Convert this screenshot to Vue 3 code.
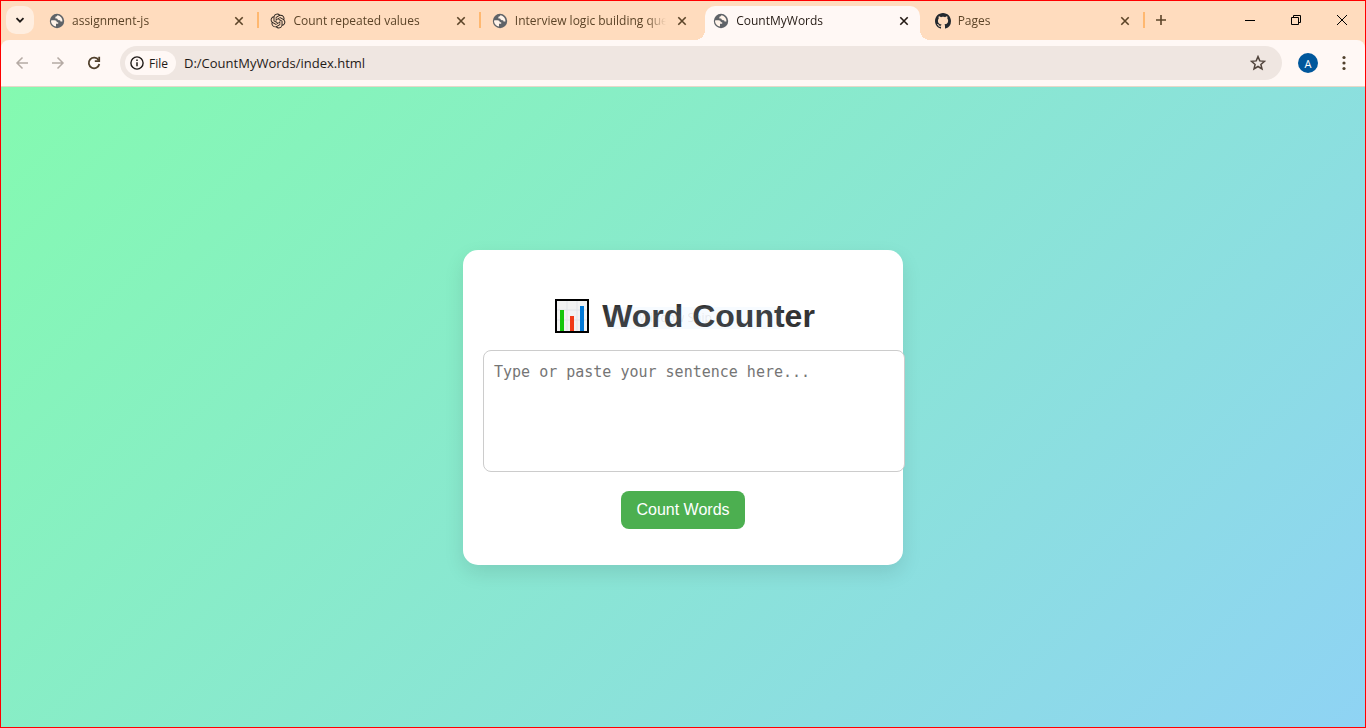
<script setup>
import { ref } from 'vue'

const tabs = [
  { title: 'assignment-js', icon: 'globe' },
  { title: 'Count repeated values', icon: 'knot' },
  { title: 'Interview logic building questions', icon: 'globe' },
  { title: 'CountMyWords', icon: 'globe', active: true },
  { title: 'Pages', icon: 'github' },
]
const address = ref('D:/CountMyWords/index.html')
const sentence = ref('')
</script>

<template>
  <div class="window">
    <header class="strip">
      <button class="search-tabs" aria-label="Search tabs">
        <svg width="10" height="10" viewBox="0 0 10 10"><path d="M1.5 3.2 5 6.7 8.5 3.2" fill="none" stroke="#1f1a17" stroke-width="1.8" /></svg>
      </button>
      <nav class="tabs">
        <div v-for="(tab, i) in tabs" :key="i" class="tab" :class="{ active: tab.active, plain: i === 2 }">
          <div class="tab-body">
            <svg v-if="tab.icon === 'globe'" class="favicon" viewBox="0 0 16 16">
              <circle cx="8" cy="8" r="7.2" fill="#5f6368" />
              <path d="M2.3 7.2h3.1c1.7 0 2.4.9 2.4 2.1h1.4v1.5H7v2.6c-2.7-.3-4.8-2.4-5-5zM8.3 2.3c-.1 1-.8 1.4-1.9 1.4v1.8h1.7c.3 1.2 1.3 1.8 2.5 1.8.5 0 .9.5.9 1.2h1.9c.4-2.7-1.7-5.6-5.1-6.2z" fill="#fff3e9" />
            </svg>
            <svg v-else-if="tab.icon === 'knot'" class="favicon" viewBox="-1 -1 26 26" fill="#29231e">
              <path d="M22.2819 9.8211a5.9847 5.9847 0 0 0-.5157-4.9108 6.0462 6.0462 0 0 0-6.5098-2.9A6.0651 6.0651 0 0 0 4.9807 4.1818a5.9847 5.9847 0 0 0-3.9977 2.9 6.0462 6.0462 0 0 0 .7427 7.0966 5.98 5.98 0 0 0 .511 4.9107 6.051 6.051 0 0 0 6.5146 2.9001A5.9847 5.9847 0 0 0 13.2599 24a6.0557 6.0557 0 0 0 5.7718-4.2058 5.9894 5.9894 0 0 0 3.9977-2.9001 6.0557 6.0557 0 0 0-.7475-7.0729zm-9.022 12.6081a4.4755 4.4755 0 0 1-2.8764-1.0408l.1419-.0804 4.7783-2.7582a.7948.7948 0 0 0 .3927-.6813v-6.7369l2.02 1.1686a.071.071 0 0 1 .038.052v5.5826a4.504 4.504 0 0 1-4.4945 4.4944zm-9.6607-4.1254a4.4708 4.4708 0 0 1-.5346-3.0137l.142.0852 4.783 2.7582a.7712.7712 0 0 0 .7806 0l5.8428-3.3685v2.3324a.0804.0804 0 0 1-.0332.0615L9.74 19.9502a4.4992 4.4992 0 0 1-6.1408-1.6464zM2.3408 7.8956a4.485 4.485 0 0 1 2.3655-1.9728V11.6a.7664.7664 0 0 0 .3879.6765l5.8144 3.3543-2.0201 1.1685a.0757.0757 0 0 1-.071 0l-4.8303-2.7865A4.504 4.504 0 0 1 2.3408 7.872zm16.5963 3.8558L13.1038 8.364 15.1192 7.2a.0757.0757 0 0 1 .071 0l4.8303 2.7913a4.4944 4.4944 0 0 1-.6765 8.1042v-5.6772a.79.79 0 0 0-.407-.667zm2.0107-3.0231l-.142-.0852-4.7735-2.7818a.7759.7759 0 0 0-.7854 0L9.409 9.2297V6.8974a.0662.0662 0 0 1 .0284-.0615l4.8303-2.7866a4.4992 4.4992 0 0 1 6.6802 4.66zM8.3065 12.863l-2.02-1.1638a.0804.0804 0 0 1-.038-.0567V6.0742a4.4992 4.4992 0 0 1 7.3757-3.4537l-.142.0805L8.704 5.459a.7948.7948 0 0 0-.3927.6813zm1.0976-2.3654l2.602-1.4998 2.6069 1.4998v2.9994l-2.5974 1.4997-2.6067-1.4997Z" />
            </svg>
            <svg v-else class="favicon" viewBox="0 0 16 16" fill="#24292f">
              <path d="M8 0C3.58 0 0 3.58 0 8c0 3.54 2.29 6.53 5.47 7.59.4.07.55-.17.55-.38 0-.19-.01-.82-.01-1.49-2.01.37-2.53-.49-2.69-.94-.09-.23-.48-.94-.82-1.13-.28-.15-.68-.52-.01-.53.63-.01 1.08.58 1.23.82.72 1.21 1.87.87 2.33.66.07-.52.28-.87.51-1.07-1.78-.2-3.64-.89-3.64-3.95 0-.87.31-1.59.82-2.15-.08-.2-.36-1.02.08-2.12 0 0 .67-.21 2.2.82.64-.18 1.32-.27 2-.27s1.36.09 2 .27c1.53-1.04 2.2-.82 2.2-.82.44 1.1.16 1.92.08 2.12.51.56.82 1.27.82 2.15 0 3.07-1.87 3.75-3.65 3.95.29.25.54.73.54 1.48 0 1.07-.01 1.93-.01 2.2 0 .21.15.46.55.38A8.01 8.01 0 0 0 16 8c0-4.42-3.58-8-8-8z" />
            </svg>
            <span class="tab-title">{{ tab.title }}</span>
            <button class="tab-close" :aria-label="'Close ' + tab.title">
              <svg width="10" height="10" viewBox="0 0 10 10"><path d="m1.3 1.3 7.4 7.4m0-7.4L1.3 8.7" fill="none" stroke="currentColor" stroke-width="1.6" /></svg>
            </button>
          </div>
        </div>
      </nav>
      <button class="new-tab" aria-label="New tab">
        <svg width="12" height="12" viewBox="0 0 12 12"><path d="M6 1v10M1 6h10" fill="none" stroke="#5c4428" stroke-width="1.6" /></svg>
      </button>
      <div class="controls">
        <button aria-label="Minimize"><svg width="10" height="10" viewBox="0 0 10 10"><path d="M0 5.5h10" stroke="#000" /></svg></button>
        <button aria-label="Restore"><svg width="10" height="10" viewBox="0 0 10 10"><path d="M.5 2.5h7v7h-7zM2.5 2.5v-2h7v7h-2" fill="none" stroke="#000" /></svg></button>
        <button aria-label="Close"><svg width="10" height="10" viewBox="0 0 10 10"><path d="m0 0 10 10M10 0 0 10" stroke="#000" /></svg></button>
      </div>
    </header>

    <div class="toolbar">
      <div class="nav-buttons">
        <button class="faded" aria-label="Back"><svg width="14" height="14" viewBox="0 0 14 14"><path d="M13 7H2m5.5-5.5L2 7l5.5 5.5" fill="none" stroke="currentColor" stroke-width="1.5" /></svg></button>
        <button class="faded" aria-label="Forward"><svg width="14" height="14" viewBox="0 0 14 14"><path d="M1 7h11M6.5 1.5 12 7l-5.5 5.5" fill="none" stroke="currentColor" stroke-width="1.5" /></svg></button>
        <button aria-label="Reload"><svg width="14" height="14" viewBox="0 0 14 14"><path d="M11.6 4.2A5.3 5.3 0 1 0 12.3 8" fill="none" stroke="#51402c" stroke-width="1.8" /><path d="M12.2.8v4.4H7.8" fill="none" stroke="#51402c" stroke-width="1.8" /></svg></button>
      </div>
      <div class="omnibox">
        <button class="chip">
          <svg width="14" height="14" viewBox="0 0 14 14"><circle cx="7" cy="7" r="6.1" fill="none" stroke="#1f1a17" stroke-width="1.4" /><path d="M7 6.2v4M7 3.6v1.5" stroke="#1f1a17" stroke-width="1.5" /></svg>
          <span>File</span>
        </button>
        <input v-model="address" class="address" type="text" aria-label="Address" spellcheck="false" />
        <button class="star" aria-label="Bookmark this tab">
          <svg width="16" height="16" viewBox="0 0 16 16"><path d="m8 1.6 1.8 4.3 4.7.4-3.6 3.1 1.1 4.6L8 11.5 4 14l1.1-4.6L1.5 6.3l4.7-.4z" fill="none" stroke="#51443c" stroke-width="1.5" /></svg>
        </button>
      </div>
      <button class="avatar" aria-label="Profile">A</button>
      <button class="menu" aria-label="Menu">
        <svg width="4" height="16" viewBox="0 0 4 16" fill="#51402c"><circle cx="2" cy="2.5" r="1.6" /><circle cx="2" cy="8" r="1.6" /><circle cx="2" cy="13.5" r="1.6" /></svg>
      </button>
    </div>

    <main class="page">
      <section class="card">
        <h1>
          <svg class="chart" width="36" height="36" viewBox="0 0 36 36" role="img" aria-label="Bar chart">
            <path d="M2 2h32v32H2z" fill="#f2f2f2" />
            <path d="M13 2v32M23 2v32M2 12h32M2 22h32" stroke="#e2e4e8" />
            <path d="M6 12h4v21H6z" fill="#16c60c" />
            <path d="M16 18h4v15h-4z" fill="#f03a17" />
            <path d="M26 8h4v25h-4z" fill="#0078d7" />
            <path d="M2 2h32v32H2z" fill="none" stroke="#000" stroke-width="2" />
          </svg>
          <span>Word Counter</span>
          <small class="ghost">Window Snip</small>
        </h1>
        <textarea v-model="sentence" aria-label="Sentence" placeholder="Type or paste your sentence here..."></textarea>
        <button class="count">Count Words</button>
      </section>
    </main>
  </div>
</template>

<style>
body {
  margin: 0;
}
</style>

<style scoped>
.window {
  box-sizing: border-box;
  min-height: 100vh;
  display: flex;
  flex-direction: column;
  border: 1px solid #ff0000;
  background: #ffdcbe;
  font-family: "Open Sans", "Noto Sans", sans-serif;
  font-size: 12px;
}
button {
  display: flex;
  align-items: center;
  justify-content: center;
  margin: 0;
  padding: 0;
  border: 0;
  background: none;
  font-family: inherit;
}
svg {
  display: block;
  flex: none;
}
.strip {
  display: flex;
  height: 39px;
}
.search-tabs {
  flex: none;
  width: 28px;
  height: 28px;
  margin: 5px 4px 0 5px;
  border-radius: 10px;
  background: #ffeee0;
}
.tabs {
  display: flex;
  flex: 0 1 1107px;
  min-width: 0;
}
.tab {
  box-sizing: border-box;
  display: flex;
  flex: 1 1 0;
  min-width: 0;
  padding: 5px 2px 0 3px;
  border-right: 2px solid transparent;
  border-image: linear-gradient(transparent 11px, #ffb870 11px, #ffb870 27px, transparent 27px) 0 2 0 0;
}
.tab.plain,
.tab.active {
  border-image: none;
}
.tab-body {
  position: relative;
  display: flex;
  flex: 1;
  align-items: center;
  min-width: 0;
  padding: 0 8px 4px;
  color: #5c4428;
}
.active .tab-body {
  border-radius: 10px 10px 0 0;
  background: #fff8f5;
  color: #241a14;
}
.active .tab-body::before,
.active .tab-body::after {
  content: "";
  position: absolute;
  bottom: 0;
  width: 10px;
  height: 10px;
}
.active .tab-body::before {
  right: 100%;
  background: radial-gradient(circle at 0 0, transparent 10px, #fff8f5 10px);
}
.active .tab-body::after {
  left: 100%;
  background: radial-gradient(circle at 100% 0, transparent 10px, #fff8f5 10px);
}
.favicon {
  width: 16px;
  height: 16px;
}
.tab-title {
  flex: 1;
  min-width: 0;
  margin-left: 7px;
  overflow: hidden;
  white-space: nowrap;
  line-height: 18px;
  mask-image: linear-gradient(to left, transparent, #000 20px);
}
.tab-close {
  width: 16px;
  height: 16px;
  margin-left: 8px;
  color: inherit;
}
.new-tab {
  flex: none;
  width: 32px;
  height: 38px;
}
.controls {
  display: flex;
  margin-left: auto;
}
.controls button {
  width: 46px;
  height: 38px;
}
.toolbar {
  display: flex;
  align-items: center;
  height: 46px;
  border-bottom: 1px solid #e6d8c8;
  border-radius: 8px 8px 0 0;
  background: #fff8f5;
}
.nav-buttons {
  display: flex;
  gap: 8px;
  margin: 0 12px 0 7px;
}
.nav-buttons button {
  width: 28px;
  height: 28px;
  color: #51402c;
}
.nav-buttons .faded {
  color: #b5aaa4;
}
.omnibox {
  box-sizing: border-box;
  display: flex;
  flex: 1;
  align-items: center;
  min-width: 0;
  height: 34px;
  padding: 0 16px 0 5px;
  border-radius: 17px;
  background: #efe6e1;
}
.chip {
  gap: 5px;
  height: 24px;
  padding: 0 8px 0 5px;
  border-radius: 12px;
  background: #fff8f5;
  color: #1f1a17;
  font-size: 12px;
  font-weight: 500;
}
.address {
  flex: 1;
  min-width: 0;
  margin-left: 8px;
  padding: 0;
  border: 0;
  outline: 0;
  background: none;
  color: #1f1a17;
  font: 13px/20px "Open Sans", "Noto Sans", sans-serif;
}
.avatar {
  flex: none;
  width: 20px;
  height: 20px;
  margin-left: 16px;
  border-radius: 50%;
  background: #00579c;
  color: #fff;
  font-size: 11px;
}
.menu {
  flex: none;
  width: 20px;
  height: 28px;
  margin: 0 11px 0 16px;
}
.page {
  display: flex;
  flex: 1;
  align-items: center;
  justify-content: center;
  background: linear-gradient(135deg, #84fab0, #8fd3f4);
}
.card {
  width: 400px;
  padding: 20px 20px 36px;
  border-radius: 15px;
  background: #fff;
  box-shadow: 0 8px 20px rgba(0, 0, 0, 0.1);
  font-family: "Liberation Sans", Arial, sans-serif;
}
h1 {
  position: relative;
  display: flex;
  align-items: center;
  justify-content: center;
  gap: 12px;
  margin: 27px 0 15px;
  padding-left: 3px;
  color: #333;
  font-size: 32px;
  line-height: 38px;
}
.ghost {
  position: absolute;
  top: 10px;
  left: 124px;
  box-sizing: border-box;
  width: 174px;
  padding-left: 32px;
  background: rgba(150, 210, 255, 0.08);
  color: rgba(120, 120, 120, 0.15);
  font: 12px/22px "Open Sans", "Noto Sans", sans-serif;
}
textarea {
  display: block;
  width: 100%;
  height: 100px;
  margin: 0;
  padding: 10px;
  border: 1px solid #ccc;
  border-radius: 8px;
  outline: 0;
  resize: none;
  background: #fff;
  font: 15px/22px "DejaVu Sans Mono", "Liberation Mono", monospace;
}
textarea::placeholder {
  color: #757575;
}
.count {
  height: 38px;
  margin: 19px auto 0;
  padding: 0 15px;
  border-radius: 8px;
  background: #4caf50;
  color: #fff;
  font-size: 16px;
}
</style>
